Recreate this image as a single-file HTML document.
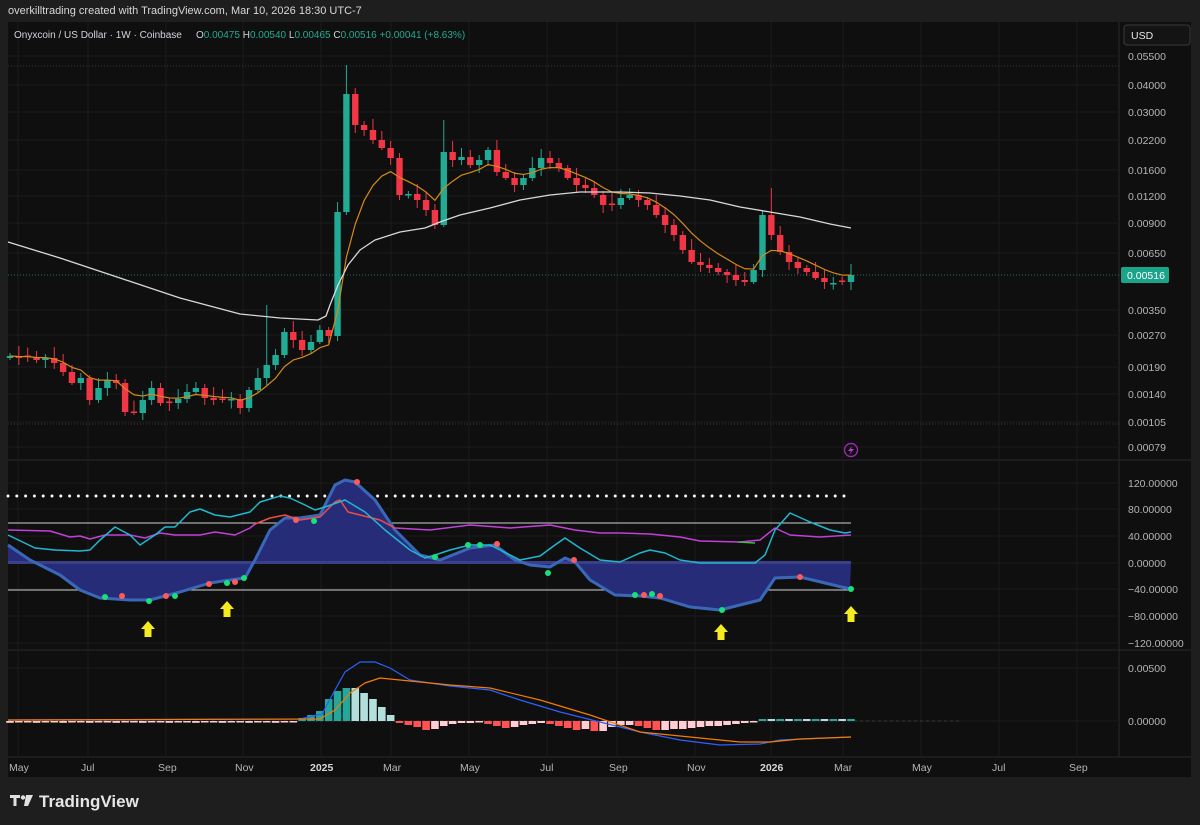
<!DOCTYPE html>
<html><head><meta charset="utf-8">
<style>
html,body{margin:0;padding:0;background:#1e1e1e;width:1200px;height:825px;overflow:hidden;font-family:"Liberation Sans",sans-serif}
.t{position:absolute;white-space:nowrap}
</style></head><body>
<div class="t" style="left:8px;top:5px;font-size:11px;color:#d8d8d8">overkilltrading created with TradingView.com, Mar 10, 2026 18:30 UTC-7</div>
<svg id="s" width="1200" height="825" style="position:absolute;left:0;top:0" xmlns="http://www.w3.org/2000/svg"></svg>
<script>
(function(){
var S=document.getElementById('s'),h='';
function R(x,y,w,hh,f,o){h+='<rect x="'+x+'" y="'+y+'" width="'+w+'" height="'+hh+'" fill="'+f+'"'+(o?' '+o:'')+'/>';}
function L(x1,y1,x2,y2,c,w,o){h+='<line x1="'+x1+'" y1="'+y1+'" x2="'+x2+'" y2="'+y2+'" stroke="'+c+'" stroke-width="'+(w||1)+'"'+(o?' '+o:'')+'/>';}
function P(pts,c,w,o){h+='<polyline fill="none" stroke="'+c+'" stroke-width="'+(w||1)+'" stroke-linejoin="round" points="'+pts.map(function(p){return p.join(',')}).join(' ')+'"'+(o?' '+o:'')+'/>';}
function T(x,y,s,c,sz,o){h+='<text x="'+x+'" y="'+y+'" fill="'+c+'" font-size="'+(sz||10.5)+'" font-family="Liberation Sans, sans-serif"'+(o?' '+o:'')+'>'+s+'</text>';}
function C(x,y,r,f){h+='<circle cx="'+x+'" cy="'+y+'" r="'+r+'" fill="'+f+'"/>';}
R(8,22,1183,755,'#0f0f0f');
L(1119,22,1119,757,'#2a2a2a');
L(8,757,1191,757,'#2a2a2a');
L(8,460,1191,460,'#2a2a2a');L(8,650,1191,650,'#2a2a2a');
[18,88,166,243,321,391,469,547,617,695,771,843,921,999,1077].forEach(function(x){L(x,22,x,757,'#1b1b1b');});
[56,85,112,140,170,196,223,253,310,335,367,394,422,447,483,509,536,563,589,616,643,668,721].forEach(function(y){L(8,y,1119,y,'#1b1b1b');});
L(8,66,1119,66,'#3a3a3a',1,'stroke-dasharray="1 2"');
L(8,424,1119,424,'#3a3a3a',1,'stroke-dasharray="1 2"');
L(8,275,1119,275,'#1d6f63',1,'stroke-dasharray="1 2"');
L(8,721,960,721,'#3a3a3a',1,'stroke-dasharray="3 3"');
var cl=[356,358,357,360,358,363,372,383,378,400,388,380,383,412,413,400,388,403,403,399,392,388,398,400,400,399,408,390,378,365,355,332,340,350,342,330,336,212,94,125,130,140,148,158,195,194,200,210,225,152,160,157,165,160,150,172,178,185,178,168,158,163,168,178,185,188,195,205,205,198,195,200,205,215,225,235,250,262,265,268,272,275,280,282,270,215,235,252,262,268,272,278,282,283,282,275];
var n=cl.length,s=(851-10)/(n-1),ema=[],e=cl[0],i,x;
for(i=0;i<n;i++){x=10+s*i;var c=cl[i],o=i?cl[i-1]:c+2;if(Math.abs(o-c)<1.5)o=c+(i%2?1.5:-1.5);
var g=c<o,col=g?'#22ab94':'#f23645';var yt=Math.min(o,c),yb=Math.max(o,c);
var wt=yt-3-(i*7%9),wb=yb+2+(i*5%7);if(i==38)wt=65;if(i==49)wt=120;if(i==86)wt=188;if(i==29)wt=305;
L(x,wt,x,wb,col,1);R(x-3.2,yt,6.4,Math.max(yb-yt,1.5),col);
e=i?e+(c-e)*0.25:c;ema.push([x,e]);}
P(ema,'#d58a17',1.2);
P([[8,242],[60,258],[120,278],[180,298],[240,314],[280,318],[318,320],[326,316],[330,305],[338,285],[348,265],[360,250],[375,240],[400,232],[425,228],[440,222],[460,215],[490,208],[520,200],[550,195],[580,192],[620,192],[650,193],[680,196],[710,200],[740,207],[770,212],[800,217],[830,224],[851,228]],'#d9d9d9',1.3);
h+='<circle cx="851" cy="450" r="6.5" fill="none" stroke="#9c27b0" stroke-width="1.4"/><path d="M852 446 L848 451 L851 451 L849 455 L854 449 L851 449 Z" fill="#b040c8"/>';
L(8,496,851,496,'#fff',3,'stroke-dasharray="0 8.8" stroke-linecap="round"');
L(8,523,851,523,'#cfcfcf',1);L(8,590,851,590,'#cfcfcf',1);
var wave=[[8,545],[30,560],[60,575],[80,590],[100,598],[130,600],[150,600],[180,592],[210,583],[230,580],[245,578],[255,560],[270,530],[285,518],[300,518],[320,515],[335,485],[345,480],[355,482],[375,500],[395,530],[420,555],[440,560],[470,548],[495,545],[515,560],[530,565],[550,567],[565,558],[575,562],[590,580],[615,595],[640,596],[660,598],[690,607],[720,610],[760,600],[775,578],[800,577],[850,589]];
h+='<polygon fill="#272c78" points="8,563 '+wave.map(function(p){return p.join(',')}).join(' ')+' 851,563"/>';
R(8,561,843,3,'#3a3f8a');
P(wave,'#3a68b8',3);
P([[8,530],[50,531],[70,537],[80,536],[90,539],[105,535],[130,535],[145,538],[160,533],[175,535],[200,535],[215,532],[235,535],[250,528],[255,524]],'#c040d8',1.5);
P([[255,524],[270,518],[285,515],[300,520],[320,517],[335,502],[340,500],[348,512],[380,520],[395,528]],'#f04a4a',1.5);
P([[395,528],[430,530],[470,525],[510,528],[550,525],[575,530],[600,533],[620,533],[650,534],[680,537],[700,541],[740,542],[760,540],[775,528],[790,535],[820,537],[851,535]],'#c040d8',1.5);
L(738,542,755,543,'#4caf50',1.5);
P([[8,535],[35,548],[55,550],[80,551],[90,550],[100,540],[115,527],[130,535],[140,545],[155,535],[165,527],[175,527],[190,512],[200,509],[215,515],[230,517],[250,512],[260,502],[280,496],[290,498],[305,505],[315,510],[325,507],[345,500],[365,512],[385,530],[410,550],[425,558],[435,555],[450,550],[470,545],[490,545],[500,550],[520,560],[540,556],[555,545],[565,538],[580,548],[600,560],[620,562],[640,553],[650,550],[665,553],[680,560],[700,563],[755,563],[765,555],[775,530],[790,513],[810,522],[830,530],[845,533],[851,532]],'#20b8d0',1.5);
var G='#19e07a',Rd='#ff5a5a';
[[105,597,G],[122,596,Rd],[149,601,G],[166,596,Rd],[175,596,G],[209,584,Rd],[227,583,G],[235,582,Rd],[244,578,G],[296,520,Rd],[314,521,G],[357,482,Rd],[435,557,G],[468,545,G],[480,545,G],[497,544,Rd],[548,573,G],[574,560,Rd],[635,595,G],[644,595,Rd],[652,594,G],[660,596,Rd],[722,610,G],[800,577,Rd],[851,589,G]].forEach(function(d){C(d[0],d[1],3,d[2]);});
[[148,630],[227,610],[721,633],[851,615]].forEach(function(a){h+='<path d="M'+a[0]+' '+(a[1]-9)+' L'+(a[0]+7)+' '+(a[1]-1)+' L'+(a[0]+3.5)+' '+(a[1]-1)+' L'+(a[0]+3.5)+' '+(a[1]+7)+' L'+(a[0]-3.5)+' '+(a[1]+7)+' L'+(a[0]-3.5)+' '+(a[1]-1)+' L'+(a[0]-7)+' '+(a[1]-1)+' Z" fill="#f5eb1e"/>';});
var hv=[];for(i=0;i<n;i++)hv.push(i<33?((i%3)-1)*0.8-1:0);
var pos={33:3,34:6,35:10,36:22,37:30,38:33,39:33,40:28,41:22,42:14,43:6};
var neg={44:-2,45:-4,46:-6,47:-9,48:-8,49:-5,50:-3,51:-2,52:-2,53:-1,54:-3,55:-5,56:-7,57:-6,58:-4,59:-3,60:-2,61:-3,62:-5,63:-7,64:-9,65:-8,66:-10,67:-10,68:-6,69:-4,70:-4,71:-5,72:-7,73:-9,74:-9,75:-8,76:-8,77:-7,78:-6,79:-5,80:-5,81:-4,82:-3,83:-2,84:-1};
for(i=0;i<n;i++){var v=pos[i]!==undefined?pos[i]:(neg[i]!==undefined?neg[i]:(i>84?2:hv[i]));x=10+s*i;var pv=i?(pos[i-1]||neg[i-1]||0):0;
var cc;if(v>=0)cc=(i<38||v>pv)?'#26a69a':'#b2dfdb';else cc=(v<pv)?'#ff5252':'#ffcdd2';if(i<33)cc=v>=0?'#b2dfdb':'#ffcdd2';if(i>84)cc=i%2?'#26a69a':'#b2dfdb';
var a=Math.abs(v);R(x-3.8,v>=0?721-a:721,7.6,Math.max(a,1.5),cc);}
P([[8,720],[300,719],[322,714],[335,690],[345,672],[360,662],[375,662],[390,668],[410,680],[450,686],[490,690],[520,700],[560,712],[600,722],[640,732],[680,740],[720,745],[760,744],[780,740],[851,737]],'#2962ff',1.2);
P([[8,720],[320,719],[335,710],[350,693],[365,683],[380,678],[400,680],[450,685],[490,688],[540,700],[590,715],[640,732],[700,738],[740,742],[770,742],[800,739],[851,737]],'#f57c00',1.2);
[['0.05500',56],['0.04000',85],['0.03000',112],['0.02200',140],['0.01600',170],['0.01200',196],['0.00900',223],['0.00650',253],['0.00350',310],['0.00270',335],['0.00190',367],['0.00140',394],['0.00105',422],['0.00079',447],['120.00000',483],['80.00000',509],['40.00000',536],['0.00000',563],['\u221240.00000',589],['\u221280.00000',616],['\u2212120.00000',643],['0.00500',668],['0.00000',721]].forEach(function(d){T(1128,d[1]+4,d[0],'#b5b5b5',10.5);});
R(1121,267,48,16,'#1aa58a','rx="2"');T(1127,279,'0.00516','#fff',10.5);
R(1124,25,66,20,'#141414','rx="3" stroke="#3a3a3a"');T(1131,39,'USD','#e6e6e6',10.5);
[['May',9],['Jul',81],['Sep',158],['Nov',235],['Mar',383],['May',460],['Jul',540],['Sep',609],['Nov',687],['Mar',834],['May',912],['Jul',992],['Sep',1069]].forEach(function(d){T(d[1],771,d[0],'#b5b5b5',10.5);});
T(310,771,'2025','#d8d8d8',10.5,'font-weight="bold"');T(760,771,'2026','#d8d8d8',10.5,'font-weight="bold"');
T(14,38,'Onyxcoin / US Dollar \u00b7 1W \u00b7 Coinbase','#d1d4dc',10);
h+='<text x="196" y="38" font-size="10" font-family="Liberation Sans, sans-serif" fill="#d1d4dc">O<tspan fill="#22ab94">0.00475</tspan>  H<tspan fill="#22ab94">0.00540</tspan>  L<tspan fill="#22ab94">0.00465</tspan>  C<tspan fill="#22ab94">0.00516</tspan>  <tspan fill="#22ab94">+0.00041 (+8.63%)</tspan></text>';
h+='<path d="M10 795 h10 v3 h-3.5 v8 h-3 v-8 h-3.5z" fill="#e0e0e0"/><circle cx="23" cy="797.5" r="2.2" fill="#e0e0e0"/><path d="M26 795 h7 l-5 11 h-4z" fill="#e0e0e0"/>';
T(39,807,'TradingView','#e6e6e6',17,'font-weight="bold"');
S.innerHTML=h;
})();
</script>
</body></html>
